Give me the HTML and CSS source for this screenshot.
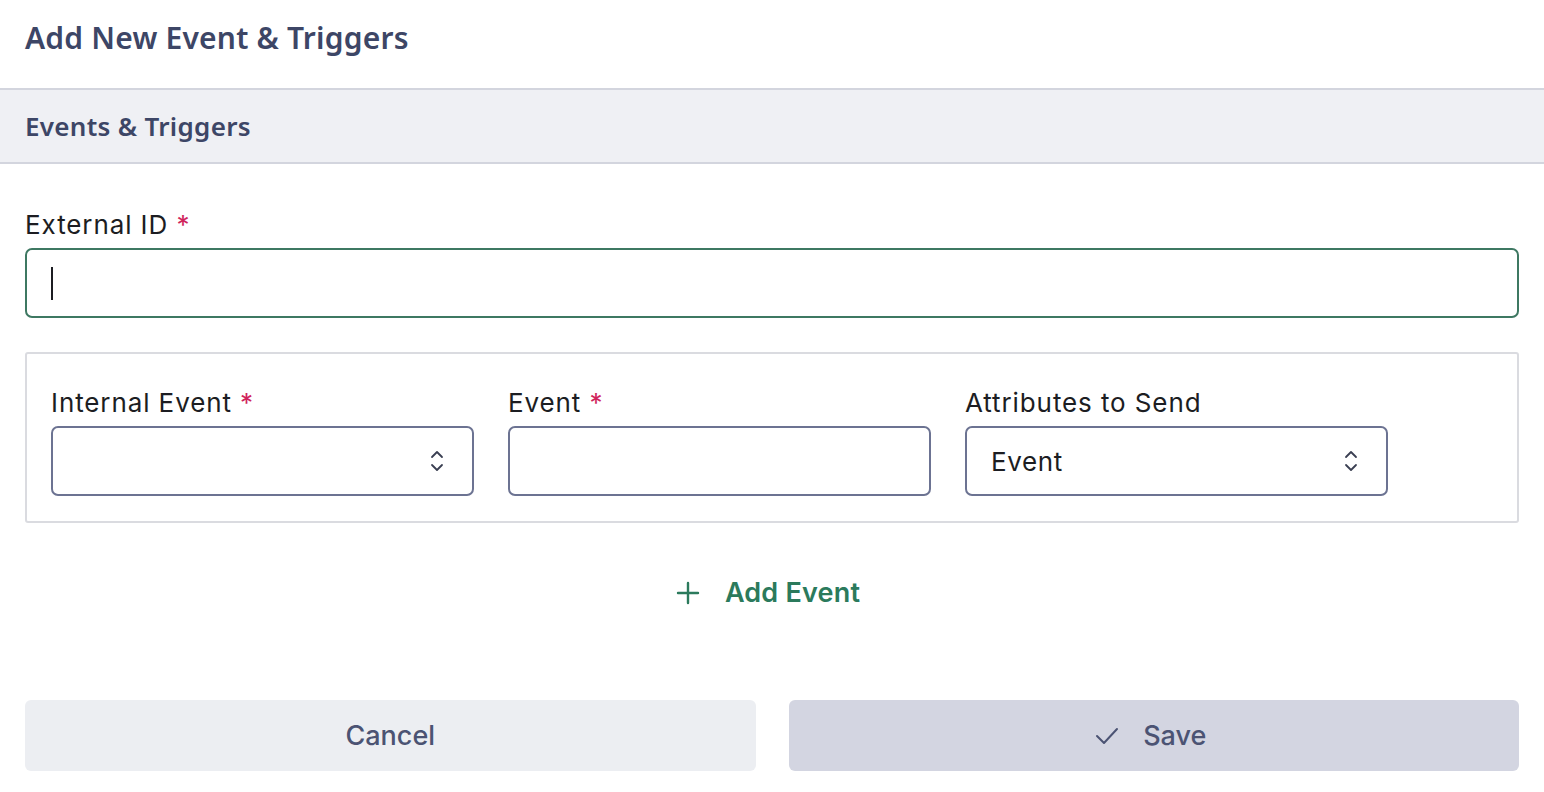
FILE: index.html
```html
<!DOCTYPE html>
<html>
<head>
<meta charset="utf-8">
<link rel="stylesheet" href="styles.css">
</head>
<body>
<div class="page">
  <header class="title-bar"><h1>Add New Event &amp; Triggers</h1></header>
  <div class="section-bar"><h2>Events &amp; Triggers</h2></div>
  <div class="content">
    <div class="field">
      <label class="label">External ID <span class="req">*</span></label>
      <div class="input focused"><span class="caret"></span></div>
    </div>
    <div class="card">
      <div class="field">
        <label class="label">Internal Event <span class="req">*</span></label>
        <div class="input select">
          <span class="val"></span>
          <svg class="chev" width="14" height="24" viewBox="0 0 14 24"><path d="M2 8 L7 3 L12 8 M2 16 L7 21 L12 16" fill="none" stroke="#3a3f52" stroke-width="1.8" stroke-linecap="round" stroke-linejoin="round"/></svg>
        </div>
      </div>
      <div class="field">
        <label class="label">Event <span class="req">*</span></label>
        <div class="input"></div>
      </div>
      <div class="field">
        <label class="label">Attributes to Send</label>
        <div class="input select">
          <span class="val">Event</span>
          <svg class="chev" width="14" height="24" viewBox="0 0 14 24"><path d="M2 8 L7 3 L12 8 M2 16 L7 21 L12 16" fill="none" stroke="#3a3f52" stroke-width="1.8" stroke-linecap="round" stroke-linejoin="round"/></svg>
        </div>
      </div>
    </div>
    <div class="add-row">
      <button class="add-btn">
        <svg width="24" height="24" viewBox="0 0 24 24"><path d="M12 2 V22 M2 12 H22" stroke="#2b7a5c" stroke-width="2.4" stroke-linecap="round"/></svg>
        <span>Add Event</span>
      </button>
    </div>
    <div class="actions">
      <button class="btn cancel">Cancel</button>
      <button class="btn save">
        <svg width="24" height="20" viewBox="0 0 24 20"><path d="M2 10 L9 17 L22 3" fill="none" stroke="#4b5373" stroke-width="2" stroke-linecap="round" stroke-linejoin="round"/></svg>
        <span>Save</span>
      </button>
    </div>
  </div>
</div>
</body>
</html>
```

FILE: styles.css
```css
* { box-sizing: border-box; }
html, body { margin: 0; padding: 0; background: #fff; }
body { font-family: Inter, "Noto Sans", sans-serif; color: #1c1d22; }
.page { width: 1544px; }
.title-bar {
  height: 90px;
  border-bottom: 2px solid #d3d5de;
  display: flex;
  align-items: center;
  padding: 0 25px;
  padding-bottom: 14px;
}
.title-bar h1 {
  margin: 0;
  font-family: "Noto Sans", sans-serif;
  font-weight: 600;
  font-size: 30px;
  color: #3d4666;
  letter-spacing: 0.2px;
}
.section-bar {
  height: 74px;
  background: #eff0f4;
  border-bottom: 2px solid #d3d5de;
  display: flex;
  align-items: center;
  padding: 0 25px;
}
.section-bar h2 {
  margin: 0;
  font-family: "Noto Sans", sans-serif;
  font-weight: 600;
  font-size: 26px;
  color: #3d4666;
  letter-spacing: 0.3px;
}
.content { padding: 46px 25px 0 25px; }
.field { display: flex; flex-direction: column; }
.label {
  font-size: 26px;
  line-height: 30px;
  margin-bottom: 8px;
  color: #1c1d22;
  letter-spacing: 0.9px;
}
.req { color: #d0245c; }
.input {
  height: 70px;
  border: 2px solid #6c7392;
  border-radius: 7px;
  background: #fff;
  display: flex;
  align-items: center;
  padding: 0 24px;
  font-size: 26px;
  letter-spacing: 0.6px;
}
.input.focused { border-color: #3e7862; }
.caret { width: 2px; height: 33px; background: #1c1d22; }
.select { justify-content: space-between; padding-right: 28px; }
.val { color: #1c1d22; }
.card {
  margin-top: 34px;
  border: 2px solid #dadbe0;
  border-radius: 3px;
  padding: 34px 129px 25px 24px;
  display: grid;
  grid-template-columns: repeat(3, 1fr);
  column-gap: 34px;
}
.add-row {
  display: flex;
  justify-content: center;
  margin-top: 53px;
}
.add-btn {
  background: none;
  border: 0;
  padding: 0;
  display: flex;
  align-items: center;
  gap: 25px;
  font-family: Inter, "Noto Sans", sans-serif;
  font-weight: 600;
  font-size: 27px;
  letter-spacing: 0.2px;
  color: #2b7a5c;
  margin-right: 8px;
}
.actions {
  margin-top: 91px;
  display: grid;
  grid-template-columns: 1fr 1fr;
  column-gap: 33px;
}
.btn {
  height: 71px;
  border: 0;
  border-radius: 6px;
  font-family: Inter, "Noto Sans", sans-serif;
  font-size: 27px;
  font-weight: 500;
  color: #4b5373;
  display: flex;
  align-items: center;
  justify-content: center;
  gap: 24px;
}
.cancel { background: #eceef2; }
.save { background: #d3d5e1; padding-right: 12px; }
```
